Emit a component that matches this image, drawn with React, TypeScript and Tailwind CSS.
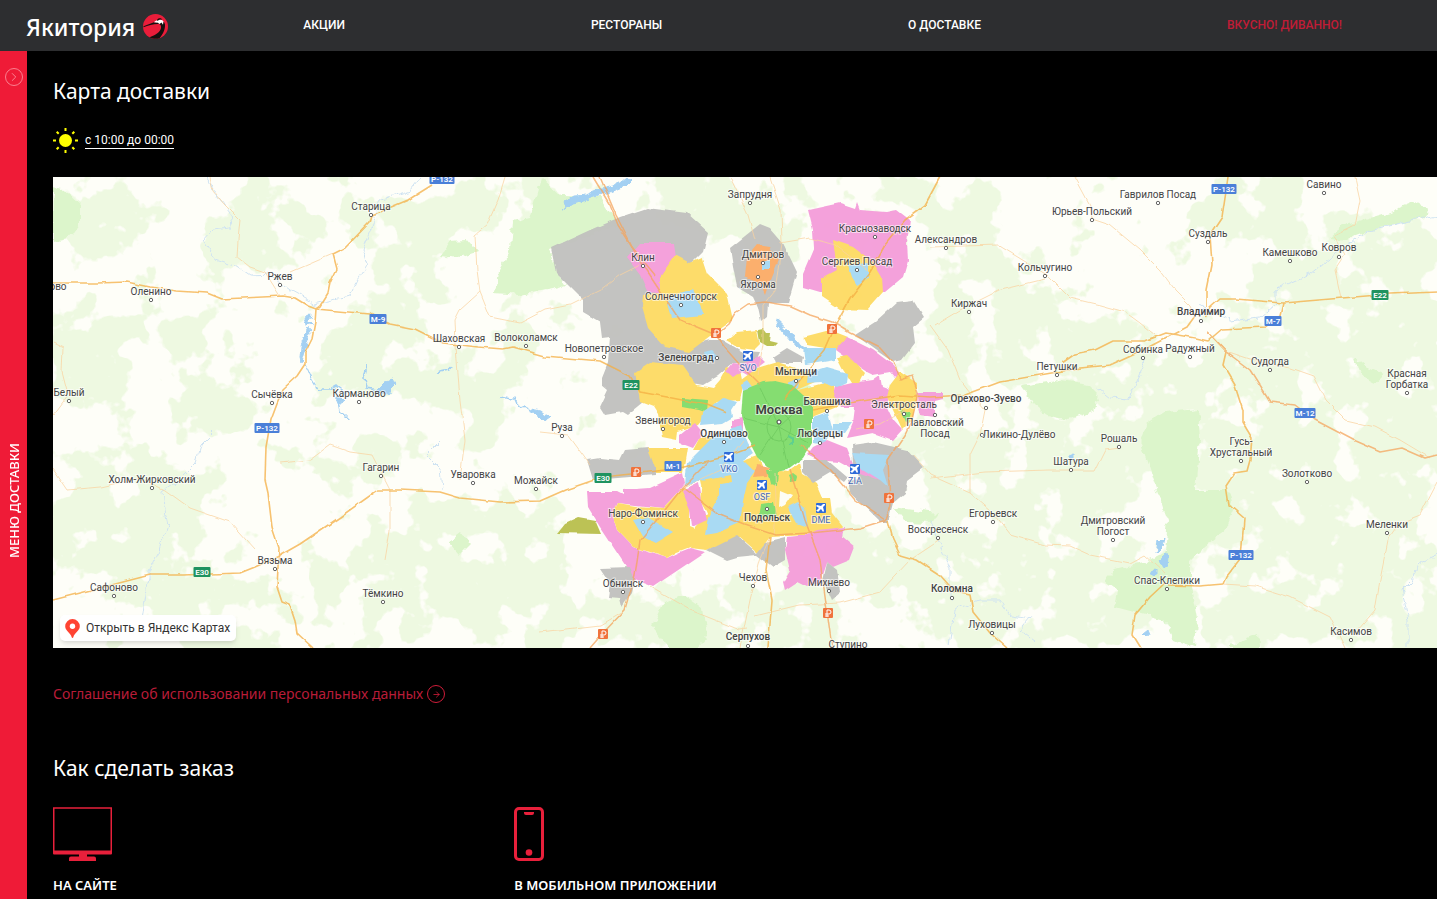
import { ArrowRight, ChevronRight } from "lucide-react";

type Point = [number, number];

const NAV = [
  { label: "АКЦИИ", href: "#promo" },
  { label: "РЕСТОРАНЫ", href: "#restaurants" },
  { label: "О ДОСТАВКЕ", href: "#delivery" },
  { label: "ВКУСНО! ДИВАННО!", href: "#sofa", accent: true },
];

// Zone colours
const GRAY = "#c0c0be";
const PINK = "#f49cda";
const YELLOW = "#fddb63";
const BLUE = "#a5d8f3";
const GREEN = "#7fdc6a";
const ORANGE = "#fbab66";
const OLIVE = "#b9bf4c";

// Delivery zones, painted in order
const ZONES: [string, string][] = [
  [GRAY, "551,248 590,230 620,217 647,208 687,213 708,232 703,252 692,263 700,300 690,345 710,340 723,340 743,352 760,353 755,364 733,363 718,376 703,385 692,383 680,372 650,380 643,402 627,415 622,412 605,415 600,407 608,390 602,385 602,377 608,362 610,337 602,338 600,322 583,312 583,300 556,273"],
  [PINK, "640,243 673,243 675,258 660,277 660,292 648,293 640,275 627,258"],
  [YELLOW, "675,255 690,263 702,258 707,273 727,293 733,320 722,327 710,337 690,352 665,347 648,328 642,307 643,295 660,292 660,277"],
  [BLUE, "670,297 693,290 698,302 703,315 672,318 668,305"],
  [GRAY, "730,248 750,232 760,224 770,228 783,243 797,272 788,303 768,303 767,317 761,322 758,308 753,297 737,287 733,267"],
  [ORANGE, "757,245 770,247 778,260 770,280 765,295 760,284 745,277 747,257"],
  [BLUE, "762,262 770,260 770,269 762,269"],
  [PINK, "808,210 840,203 855,208 857,202 860,210 887,212 897,210 910,220 907,243 908,260 903,277 885,292 820,293 803,288 803,273 814,247 813,230"],
  [YELLOW, "833,240 853,247 873,262 882,277 883,292 867,310 840,309 822,297 822,278 837,270"],
  [BLUE, "848,265 868,263 868,278 857,285 852,277"],
  [GRAY, "855,335 875,322 897,302 913,300 924,318 913,327 915,343 902,360 893,362 880,353"],
  [OLIVE, "758,330 763,329 766,333 770,333 769,341 777,343 774,346 767,346 760,342"],
  [YELLOW, "727,340 737,332 757,330 760,345 755,350 740,348"],
  [YELLOW, "803,337 830,330 848,337 837,350 807,345"],
  [BLUE, "803,348 835,348 835,360 817,363 805,365"],
  [GRAY, "773,357 787,348 803,357 802,363 775,363"],
  [YELLOW, "635,372 650,362 683,365 697,385 713,388 720,380 727,367 740,370 743,385 740,400 717,402 698,425 678,432 677,440 662,437 658,415 653,407 640,402"],
  [BLUE, "704,352 712,350 718,356 714,362 706,360"],
  [PINK, "726,372 733,363 741,364 760,357 765,362 757,368 756,380 742,372 733,378"],
  [YELLOW, "757,368 777,362 790,366 808,372 815,382 792,392 770,386 745,390 741,380"],
  [BLUE, "741,384 747,380 753,388 745,395"],
  [BLUE, "788,383 800,378 798,388 790,391"],
  [YELLOW, "798,390 820,384 833,380 837,407 812,417 805,402"],
  [PINK, "835,350 847,337 873,350 893,365 902,378 900,384 890,372 873,375 867,372 853,363"],
  [PINK, "835,387 852,383 873,380 880,375 882,387 890,390 887,407 893,420 902,430 893,440 873,433 847,438 853,423 855,407 840,407 833,396"],
  [YELLOW, "837,357 847,355 865,373 860,383 852,383 842,367"],
  [BLUE, "808,373 827,367 848,373 847,383 837,388 820,382 807,383"],
  [YELLOW, "900,372 917,383 917,400 912,420 902,430 893,410 887,397 890,385"],
  [PINK, "918,392 943,392 943,398 935,400 935,417 920,415 917,405"],
  [GREEN, "900,410 910,412 908,420 905,422"],
  [GREEN, "682,398 708,400 707,413 698,410 682,407"],
  [BLUE, "710,408 723,398 737,402 732,410 733,417 723,423 700,425 702,413"],
  [PINK, "680,435 695,423 703,433 693,448 680,443"],
  [PINK, "732,420 742,418 742,432 732,428"],
  [YELLOW, "700,437 713,437 710,450 693,450"],
  [YELLOW, "648,448 687,448 683,473 655,473"],
  [GRAY, "587,460 600,458 620,460 625,450 648,448 655,467 655,475 593,480"],
  [YELLOW, "700,480 733,477 743,460 757,455 763,468 788,472 800,463 803,475 817,483 823,497 830,497 832,513 843,527 807,535 770,537 758,553 740,537 707,550 690,548 695,527 707,513"],
  [BLUE, "685,485 687,463 700,450 713,437 740,425 747,443 753,453 743,460 755,472 747,483 743,500 740,523 717,533 705,535 708,517 718,497 720,484 700,480"],
  [YELLOW, "702,481 731,475 732,482 720,484 720,495 707,512 700,500"],
  [GREEN, "743,390 763,382 775,381 792,385 803,395 812,402 812,443 803,458 787,470 775,472 767,467 757,457 747,437 741,417"],
  [BLUE, "813,417 828,412 833,430 823,445 813,443"],
  [BLUE, "833,423 852,423 845,433 833,432"],
  [ORANGE, "757,465 770,468 767,477 753,478"],
  [GREEN, "767,470 778,470 777,485 770,483"],
  [GREEN, "789,476 793,474 797,477 796,481 791,482"],
  [GREEN, "760,505 773,503 776,517 758,517"],
  ["#fdfdf5", "780,490 792,495 785,505 779,508"],
  [BLUE, "788,507 798,502 805,508 808,527 797,523"],
  [PINK, "587,492 617,492 623,495 623,490 650,488 683,473 685,483 677,493 663,508 617,503 612,513 617,530 633,547 667,558 680,552 690,548 705,552 653,587 635,580 600,527 588,507"],
  [YELLOW, "617,503 637,506 663,508 683,487 690,497 690,527 697,530 703,542 677,552 667,558 650,552 633,547 617,530 612,513"],
  [PINK, "682,490 698,482 701,500 707,520 692,527 690,510"],
  [BLUE, "633,520 647,517 673,532 655,543 643,537"],
  [OLIVE, "557,533 565,523 578,517 595,520 601,534"],
  [GRAY, "707,550 737,535 757,553 765,543 785,538 785,560 773,567 757,555 737,557 727,560"],
  [GRAY, "600,568 630,567 635,580 632,593 622,607 620,598 608,597 610,583"],
  [PINK, "787,537 807,535 817,530 845,527 843,537 855,547 850,560 833,567 827,562 820,583 807,587 797,582 785,590 783,582 790,570 785,550"],
  [GRAY, "827,562 837,570 840,593 832,600 823,580"],
  [GRAY, "852,445 873,442 907,450 923,468 907,480 905,493 893,503 888,522 880,522 850,493 848,480 860,478 853,463"],
  [BLUE, "852,453 890,455 883,470 888,487 880,480 860,470"],
  [PINK, "813,447 827,440 847,448 853,463 880,480 860,473 840,462 817,460 807,455"],
  [GRAY, "803,460 827,460 847,477 843,482 830,473 813,483 803,473"],
];

const PARKS = [
  "53,187 65,190 80,204 80,225 72,236 53,240",
  "541,178 560,196 600,197 618,225 551,248 557,270 566,285 552,289 520,295 495,293 498,272 510,250 512,222 530,218",
  "1330,238 1345,225 1390,212 1420,200 1427,210 1425,219 1380,227 1345,240",
  "1020,385 1055,380 1090,385 1100,395 1095,410 1070,420 1048,416 1035,405",
  "1145,425 1165,412 1198,409 1200,440 1195,490 1228,490 1233,510 1225,530 1205,545 1190,560 1190,580 1197,620 1195,648 1175,640 1165,620 1115,607 1118,590 1105,580 1115,570 1145,562 1165,552 1168,520 1160,500 1150,470 1140,440",
  "653,627 663,603 683,594 702,608 707,635 697,648 670,648",
  "440,256 450,241 467,240 477,252 460,258",
  "893,507 937,513 930,523 905,522",
  "1355,358 1367,368 1385,375 1375,383 1360,375",
  "1230,645 1257,634 1258,648 1230,648",
  "448,542 460,533 470,545 460,555",
  "788,398 802,385 816,388 826,394 815,400",
];

// Rough density of woodland, turned into ragged patches by the filter
const WOODS: [number, number, number, number][] = [
  [95, 215, 60, 45], [260, 235, 60, 45], [400, 225, 60, 40], [500, 195, 60, 30],
  [85, 360, 50, 60], [160, 330, 80, 25], [220, 400, 50, 40], [130, 520, 90, 80],
  [370, 350, 60, 50], [420, 290, 40, 30], [470, 400, 60, 40], [350, 460, 60, 30],
  [380, 590, 80, 50], [200, 610, 90, 45], [480, 560, 90, 70], [540, 610, 70, 45],
  [530, 330, 40, 30], [700, 200, 60, 30], [690, 620, 80, 45], [800, 620, 60, 35],
  [940, 210, 80, 35], [1000, 300, 70, 55], [1060, 350, 100, 45], [950, 360, 60, 40],
  [1050, 470, 110, 60], [1000, 590, 100, 70], [1170, 440, 90, 70], [1330, 340, 130, 70],
  [1300, 500, 130, 90], [1350, 260, 100, 40], [1255, 210, 60, 45], [1400, 600, 60, 60],
  [1270, 610, 80, 50], [850, 560, 70, 40], [1410, 410, 70, 70], [1080, 590, 90, 60],
  [1130, 380, 80, 40], [760, 220, 60, 40], [940, 470, 50, 60],
];

const RIVERS = [
  "205,177 213,190 230,212 232,228 212,230 203,240 215,258 235,265 250,275 270,274 290,290 315,304 330,300 350,296 357,280 367,265 362,250 372,225 380,200 410,190 420,177",
  "213,432 200,445 196,462 180,478 163,490 165,510 168,525 160,550 150,570 145,600 142,620",
  "440,440 425,455 440,470 442,490",
  "1437,555 1418,563 1412,580 1402,590 1408,620 1408,648",
  "950,648 955,610 980,600 1000,600 1010,615 1030,618 1020,630 1035,642",
  "1200,305 1230,322 1260,318 1275,305 1275,290 1310,275 1335,255 1370,230 1437,215",
  "1095,386 1110,398 1128,400 1145,360",
  "930,520 940,545 950,570 950,600",
];

const LAKES = [
  "561,210 568,206 565,201 573,196 585,195 600,189 614,186 625,177 631,178 622,187 605,194 592,198 578,203 570,205",
  "378,390 385,383 393,381 397,386 391,392 384,393",
  "305,318 311,315 309,321 312,324 307,325",
  "301,345 309,328 310,334 304,352 301,362 300,358",
  "1160,560 1165,553 1170,556 1169,567 1163,568",
  "1150,572 1154,570 1154,576 1150,576",
  "1156,553 1158,542 1164,536 1162,547",
  "1143,634 1148,630 1150,635 1146,637",
  "1068,457 1073,455 1073,461 1068,461",
  "336,400 341,397 344,400 338,405",
  "775,318 790,332 800,345 808,352 797,348 786,335",
  "530,409 540,411 549,418 546,420 535,415",
];

const STREAMS = [
  "305,364 312,380 318,390 330,390 337,386 345,392 337,398 340,412 350,422",
  "367,365 364,378 366,388 378,390",
  "500,398 510,400 516,396 520,405 533,412",
  "437,373 450,370 452,366",
];

const HIGHWAYS = [
  "53,283 97,283 127,282 150,287 177,291 207,293 222,299 283,296 295,298 308,306 316,309 370,314 390,324 415,329 443,343 478,347 503,349 513,347 545,356 600,361 630,376 640,392 667,397 707,405 727,413",
  "432,185 408,200 372,215 370,222 345,248 333,254 337,269 330,283 328,293 320,306 316,309 315,323 312,339 305,353 305,364 297,376 283,389 277,403 271,419 266,447 265,480 268,493 272,527 279,548 277,587 282,602 290,605 295,620 297,633 313,648",
  "53,600 92,590 150,575 182,575 240,573 255,567 279,556 300,544 340,517 378,490 400,490 440,492 460,498 500,502 540,501 565,490 603,477 640,473 680,468 720,458 755,445",
  "1437,292 1390,294 1283,303 1237,299 1220,299 1210,308 1205,318",
  "1283,303 1280,316 1265,327 1222,329 1208,341 1195,338 1166,333 1145,341 1113,341 1095,350 1075,354 1062,363",
  "1195,316 1187,327 1145,349 1110,365 1080,368 1040,375 1000,382 965,395 930,397 900,395 850,403 812,410",
  "1228,177 1222,217 1210,235 1212,265 1207,290 1207,308",
  "1208,333 1226,352 1223,365 1235,385 1243,410 1243,423 1252,438 1250,460 1247,471 1234,473 1226,485 1229,505 1244,518 1241,558 1226,577 1223,584",
  "1165,583 1150,597 1135,615 1132,635 1140,648",
  "1168,585 1200,586 1223,584",
  "888,520 893,540 900,555 917,560 940,575 955,592 970,595 973,612 990,633 1007,648",
  "770,537 766,570 772,600 768,648",
  "940,177 925,205 905,220 885,245 870,272 850,298 838,320 825,350 800,380 785,400",
];

const TOLL_ROADS = [
  "593,177 610,205 618,225 640,260 660,290 680,320 716,335 725,348 740,365 760,385",
  "600,177 616,215 632,247 655,275",
  "716,335 728,325 735,313 748,304 765,302 790,306 810,315 832,322 850,333 880,348 895,365 900,380 912,376 918,392 912,420 905,435 888,460 890,505 886,520 860,528 810,533 775,535 745,525 720,515 700,500 683,487",
  "590,648 603,633 625,610 635,575 640,540 665,510 683,487 710,460",
  "790,470 805,520 820,560 827,610 832,648",
  "1208,333 1226,352 1250,370 1270,402 1295,405 1315,420 1355,441 1380,452 1402,448 1425,458 1437,455",
  "800,445 830,470 855,500 885,520",
];

const LOCAL_ROADS = [
  "210,177 213,190 225,205 240,220 238,240 237,257 250,267 265,272 280,296",
  "505,177 498,200 487,225 475,235 477,270 480,292 460,310 455,320 456,345 458,375 460,400 465,440 460,480",
  "480,292 490,317 520,323 545,310 570,305 600,290 620,275 640,265",
  "291,272 333,254",
  "53,343 63,348 62,372 68,395 53,415",
  "770,177 781,210 782,243 775,290 763,305 763,345 758,375",
  "730,177 748,215 755,240",
  "780,243 810,238 835,245 870,272",
  "930,247 998,245 1047,275 1070,298 1100,305 1125,312 1140,323 1155,335",
  "1075,177 1090,205 1092,219 1110,225 1140,250 1160,270 1175,290 1190,305 1195,316",
  "930,325 948,350 960,380 970,393 985,410 980,435 970,455 970,493",
  "912,455 930,475 970,493 990,510 1010,535 1045,545 1070,546 1090,555 1130,563 1145,555 1165,573",
  "1355,177 1360,200 1355,225 1335,235 1345,255 1335,270 1341,298",
  "1223,584 1255,586 1290,597 1330,617 1345,648",
  "1226,352 1250,360 1290,368 1313,376 1325,400 1345,420 1375,427 1400,440 1430,458",
  "1437,482 1420,515 1400,523 1388,540 1380,580 1375,610 1358,630",
  "650,587 690,610 740,630 747,629",
  "755,616 800,605 840,603 880,592 910,560 940,540",
  "53,468 68,490 100,487 140,478 165,490 190,508 230,522 255,550",
  "540,432 568,435 590,465",
  "740,648 750,600 760,560 770,537",
  "540,632 600,625 625,610",
  "1045,279 1000,290 960,310 935,325",
  "930,478 985,472 1050,470 1095,470 1105,450 1120,448",
  "280,463 310,460 330,445 350,452 372,455 390,490 390,530 385,560",
  "855,430 880,425 905,410",
  "775,472 776,500 773,537",
  "743,440 720,470 683,487",
];

// label, centre x, baseline y, dot, weight
const TOWNS: [string, number, number, Point | null, number?][] = [
  ["Старица", 371, 210, [371, 215]],
  ["Ржев", 280, 280, [280, 285]],
  ["Оленино", 151, 295, [151, 300]],
  ["ово", 58, 290, null],
  ["Белый", 69, 396, [69, 401]],
  ["Сычёвка", 272, 398, [272, 403]],
  ["Карманово", 359, 397, [359, 402]],
  ["Шаховская", 459, 342, [459, 347]],
  ["Волоколамск", 526, 341, [526, 346]],
  ["Новопетровское", 604, 352, [604, 357]],
  ["Руза", 562, 431, [562, 436]],
  ["Гагарин", 381, 471, [381, 476]],
  ["Уваровка", 473, 478, [473, 483]],
  ["Можайск", 536, 484, [536, 489]],
  ["Холм-Жирковский", 152, 483, [152, 488]],
  ["Вязьма", 275, 564, [275, 569]],
  ["Сафоново", 114, 591, [114, 596]],
  ["Тёмкино", 383, 597, [383, 602]],
  ["Запрудня", 750, 198, [750, 203]],
  ["Клин", 643, 261, [643, 266]],
  ["Солнечногорск", 681, 300, [681, 305]],
  ["Дмитров", 763, 258, [763, 263]],
  ["Яхрома", 758, 288, [758, 277]],
  ["Краснозаводск", 875, 232, [875, 237]],
  ["Сергиев Посад", 857, 265, [857, 270]],
  ["Александров", 946, 243, [946, 248]],
  ["Зеленоград", 686, 361, [717, 358], 500],
  ["Мытищи", 796, 375, [796, 381], 500],
  ["Балашиха", 827, 405, [827, 411], 500],
  ["Электросталь", 904, 408, [904, 414]],
  ["Павловский", 935, 426, [935, 415]],
  ["Посад", 935, 437, null],
  ["Звенигород", 663, 424, [663, 429]],
  ["Одинцово", 724, 437, [724, 442], 500],
  ["Люберцы", 820, 437, [820, 443], 500],
  ["Наро-Фоминск", 643, 517, [643, 522]],
  ["Подольск", 767, 521, [767, 509], 500],
  ["Обнинск", 623, 587, [623, 592]],
  ["Чехов", 753, 581, [753, 586]],
  ["Михнево", 829, 586, [829, 591]],
  ["Серпухов", 748, 640, [748, 646], 500],
  ["Ступино", 848, 648, null],
  ["Воскресенск", 938, 533, [938, 538]],
  ["Коломна", 952, 592, [952, 598], 500],
  ["Луховицы", 992, 628, [992, 633]],
  ["Егорьевск", 993, 517, [993, 522]],
  ["Шатура", 1071, 465, [1071, 470]],
  ["Рошаль", 1119, 442, [1119, 447]],
  ["Ликино-Дулёво", 1019, 438, [982, 435]],
  ["Дмитровский", 1113, 524, null],
  ["Погост", 1113, 535, [1113, 540]],
  ["Спас-Клепики", 1167, 584, [1167, 589]],
  ["Орехово-Зуево", 986, 402, [986, 408], 500],
  ["Петушки", 1057, 370, [1057, 375]],
  ["Киржач", 969, 307, [969, 312]],
  ["Кольчугино", 1045, 271, [1045, 276]],
  ["Юрьев-Польский", 1092, 215, [1092, 220]],
  ["Гаврилов Посад", 1158, 198, [1158, 203]],
  ["Суздаль", 1208, 237, [1208, 242]],
  ["Владимир", 1201, 315, [1201, 321], 500],
  ["Собинка", 1143, 353, [1143, 358]],
  ["Радужный", 1190, 352, [1190, 357]],
  ["Судогда", 1270, 365, [1270, 370]],
  ["Камешково", 1290, 256, [1290, 261]],
  ["Ковров", 1339, 251, [1339, 257]],
  ["Савино", 1324, 188, [1324, 193]],
  ["Красная", 1407, 377, null],
  ["Горбатка", 1407, 388, [1407, 393]],
  ["Гусь-", 1241, 445, null],
  ["Хрустальный", 1241, 456, [1241, 461]],
  ["Золотково", 1307, 477, [1307, 482]],
  ["Меленки", 1387, 528, [1387, 533]],
  ["Касимов", 1351, 635, [1351, 640]],
];

const SHIELDS: [string, number, number, string][] = [
  ["Р-132", 442, 179, "#4a7fd8"],
  ["М-9", 378, 319, "#4a7fd8"],
  ["Р-132", 267, 428, "#4a7fd8"],
  ["E30", 202, 572, "#1f9360"],
  ["E22", 631, 385, "#1f9360"],
  ["E30", 603, 478, "#1f9360"],
  ["М-1", 673, 466, "#4a7fd8"],
  ["Р-132", 1224, 189, "#4a7fd8"],
  ["E22", 1380, 295, "#1f9360"],
  ["М-7", 1273, 321, "#4a7fd8"],
  ["М-12", 1305, 413, "#4a7fd8"],
  ["Р-132", 1241, 555, "#4a7fd8"],
];

const TOLLS: Point[] = [
  [716, 333], [832, 329], [869, 424], [636, 472], [889, 498], [603, 634], [828, 613],
];

const AIRPORTS: [string, number, number][] = [
  ["SVO", 748, 356],
  ["VKO", 729, 457],
  ["OSF", 762, 485],
  ["ZIA", 855, 469],
  ["DME", 821, 508],
];

function Lines({ list, color, width }: { list: string[]; color: string; width: number }) {
  return (
    <g fill="none" stroke={color} strokeWidth={width} strokeLinejoin="round">
      {list.map((points) => (
        <polyline key={points} points={points} />
      ))}
    </g>
  );
}

function DeliveryMap() {
  return (
    <svg
      viewBox="53 177 1384 471"
      preserveAspectRatio="xMidYMid slice"
      className="block h-[471px] w-full bg-[#fefef8] font-['Roboto',sans-serif]"
      role="img"
      aria-label="Карта зон доставки"
    >
      <defs>
        {/* blurred density + noise, cut at a threshold */}
        <filter id="woods" filterUnits="userSpaceOnUse" x="53" y="177" width="1384" height="471" colorInterpolationFilters="sRGB">
          <feGaussianBlur in="SourceAlpha" stdDeviation="12" result="density" />
          <feTurbulence type="fractalNoise" baseFrequency="0.03" numOctaves="4" seed="11" result="noise" />
          <feComposite in="density" in2="noise" operator="arithmetic" k2="0.35" k3="1" k4="-0.2" result="mix" />
          <feComponentTransfer in="mix" result="cut">
            <feFuncA type="linear" slope="18" intercept="-9" />
          </feComponentTransfer>
          <feFlood floodColor="#eef9e1" />
          <feComposite in2="cut" operator="in" />
        </filter>
        <filter id="ragged" filterUnits="userSpaceOnUse" x="53" y="177" width="1384" height="471" colorInterpolationFilters="sRGB">
          <feTurbulence type="fractalNoise" baseFrequency="0.09" numOctaves="3" seed="4" />
          <feDisplacementMap in="SourceGraphic" scale="9" xChannelSelector="R" yChannelSelector="G" />
        </filter>
        <filter id="wavy" filterUnits="userSpaceOnUse" x="53" y="177" width="1384" height="471" colorInterpolationFilters="sRGB">
          <feTurbulence type="fractalNoise" baseFrequency="0.06" numOctaves="2" seed="7" />
          <feDisplacementMap in="SourceGraphic" scale="4" xChannelSelector="R" yChannelSelector="G" />
        </filter>
      </defs>

      <g filter="url(#woods)">
        {WOODS.map(([cx, cy, rx, ry]) => (
          <ellipse key={`${cx}-${cy}`} cx={cx} cy={cy} rx={rx} ry={ry} />
        ))}
      </g>

      <g filter="url(#ragged)">
        <g fill="#dcf5cb">
          {PARKS.map((points) => (
            <polygon key={points} points={points} />
          ))}
        </g>
        <Lines list={RIVERS} color="#cfe3f2" width={1} />
        <Lines list={STREAMS} color="#a3d0f2" width={1.5} />
        <g fill="#a3d0f2" stroke="#a3d0f2">
          {LAKES.map((points) => (
            <polygon key={points} points={points} />
          ))}
        </g>
      </g>

      <g filter="url(#wavy)">
        <g opacity="0.95">
          {ZONES.map(([fill, points]) => (
            <polygon key={points} points={points} fill={fill} />
          ))}
        </g>
        <g opacity="0.75">
          <Lines list={LOCAL_ROADS} color="#fad3a0" width={1} />
          <Lines list={HIGHWAYS} color="#f4ae43" width={1.6} />
          <Lines list={TOLL_ROADS} color="#f5a45c" width={1.5} />
        </g>
        {/* Moscow ring and streets */}
        <g fill="none" stroke="#62bd55" strokeWidth="1" opacity="0.5">
          <ellipse cx="779" cy="427" rx="12" ry="14" />
          <path d="M779 427 760 388M779 427 806 402M779 427 808 443M779 427 788 468M779 427 760 455M779 427 743 418" />
        </g>
        <path d="M788 436l4 2 0 5-3 1" fill="none" stroke="#5fd08f" strokeWidth="2" />
      </g>

      {SHIELDS.map(([name, x, y, fill]) => {
        const width = name.length > 3 ? (name.length > 4 ? 25 : 21) : 17;
        return (
          <g key={`${name}-${x}`}>
            <rect x={x - width / 2} y={y - 5} width={width} height={10} rx="1" fill={fill} />
            <text x={x} y={y + 3} textAnchor="middle" fontSize="8" fontWeight="600" fill="#fff">
              {name}
            </text>
          </g>
        );
      })}

      {TOLLS.map(([x, y]) => (
        <g key={`${x}-${y}`}>
          <rect x={x - 5} y={y - 5} width="10" height="10" rx="1" fill="#f0733c" />
          <path
            d={`M${x - 1} ${y + 4}v-7h2a2 2 0 0 1 0 4h-4m0 2h4`}
            fill="none"
            stroke="#fff"
            strokeWidth="1"
          />
        </g>
      ))}

      {AIRPORTS.map(([code, x, y]) => (
        <g key={code}>
          <rect x={x - 5} y={y - 5} width="10" height="10" rx="1" fill="#2f6bd8" />
          <path
            d={`M${x + 4} ${y - 4}l-2 0-2 2-4-1-1 1 3 2-2 2-1 0 2 2 0 0 1-1 2-2 2 3 1-1-1-4 2-2z`}
            fill="#fff"
          />
          <text x={x} y={y + 15} textAnchor="middle" fontSize="9" fill="#4468b5" stroke="#fff" strokeWidth="2" strokeOpacity="0.6" paintOrder="stroke">
            {code}
          </text>
        </g>
      ))}

      {TOWNS.map(([name, x, y, dot, weight]) => (
        <g key={`${name}-${x}-${y}`}>
          {dot && <circle cx={dot[0]} cy={dot[1]} r="1.7" fill="#fff" stroke="#555" strokeWidth="0.9" />}
          <text
            x={x}
            y={y}
            textAnchor="middle"
            fontSize="10"
            fontWeight={weight ?? 400}
            fill="#444"
            stroke="#fff"
            strokeWidth="2"
            strokeOpacity="0.6"
            paintOrder="stroke"
          >
            {name}
          </text>
        </g>
      ))}

      <circle cx="779" cy="422" r="2" fill="#fff" stroke="#444" />
      <text x="779" y="414" textAnchor="middle" fontSize="13" fontWeight="600" fill="#3f3f3f" stroke="#fff" strokeWidth="2" strokeOpacity="0.6" paintOrder="stroke">
        Москва
      </text>
    </svg>
  );
}

function Logo() {
  return (
    <a href="#home" className="flex items-center gap-2 pt-[2px] text-white">
      <span className="font-['Noto_Sans',sans-serif] text-[23px] leading-8 font-medium">Якитория</span>
      <svg width="25" height="25" viewBox="0 0 25 25" aria-hidden="true">
        <circle cx="12.5" cy="12.5" r="12.5" fill="#ea1d3a" />
        {/* neck, beak, white cap */}
        <path d="M14 9.500C17.500 9.500 19 12 17.500 15.500C16 19 11.500 21.500 6.500 23.300C9.500 25 13.500 25.300 16.500 24.300C19.500 21 22.300 16 22 10.500C21.500 7 18 5.500 14 7z" fill="#15100f" />
        <path d="M.500 12.200L11 8.200L15 8.500L15 10C10 10.200 5 11.500 .500 13.200z" fill="#15100f" />
        <path d="M11 8.300C13 5.500 18 4.800 20.500 7.200L20 10.800L18.500 8.600L16.500 10L15 8.700z" fill="#fff" />
        <path d="M14 6.300C15 3.800 18 3.800 19.300 5.700C17.500 5.200 16 5.500 14.800 7z" fill="#15100f" />
      </svg>
    </a>
  );
}

function SunIcon() {
  return (
    <svg width="25" height="25" viewBox="0 0 25 25" stroke="#ffff00" strokeWidth="2" aria-hidden="true">
      <circle cx="12.500" cy="12.500" r="6.500" fill="#ffff00" stroke="none" />
      <path d="M12.500 0v3M12.500 22v3M0 12.500h3M22 12.500h3M3.700 3.700l2 2M19.300 19.300l2 2M3.700 21.300l2-2M19.300 5.700l2-2" />
    </svg>
  );
}

export default function App() {
  return (
    <div className="flex min-h-screen flex-col bg-black font-['Noto_Sans',sans-serif] text-white">
      <header className="flex h-[51px] items-center bg-[#2d2e30] pl-[26px]">
        <Logo />
        <nav className="flex flex-1 justify-between pr-[95px] pb-px pl-[135px] font-['Roboto',sans-serif] text-[12px] leading-4 font-medium">
          {NAV.map((item) => (
            <a key={item.label} href={item.href} className={item.accent ? "text-[#c01c36]" : "text-white"}>
              {item.label}
            </a>
          ))}
        </nav>
      </header>

      <div className="flex flex-1">
        <aside className="w-[27px] shrink-0 bg-[#ef1b37]">
          <button type="button" className="flex h-full w-full flex-col items-center pt-[17px]">
            <span className="flex size-[18px] shrink-0 items-center justify-center rounded-full border border-[#fb7f8f] text-[#fb8f9d]">
              <ChevronRight size={14} strokeWidth={1.5} />
            </span>
            <span className="flex flex-1 rotate-180 items-center justify-center pb-4 text-[13px] leading-4 font-medium [writing-mode:vertical-rl]">
              МЕНЮ ДОСТАВКИ
            </span>
          </button>
        </aside>

        <main className="min-w-0 flex-1 overflow-hidden pl-[26px]">
          <h1 className="pt-[26px] text-[21px] leading-7">Карта доставки</h1>

          <div className="mt-[23px] flex items-center gap-[7px]">
            <SunIcon />
            <a href="#hours" className="border-b border-white pt-px font-['Roboto',sans-serif] text-[12px] leading-[15px]">
              с 10:00 до 00:00
            </a>
          </div>

          <section className="relative mt-6">
            <DeliveryMap />
            <a
              href="#yandex-maps"
              className="absolute bottom-[7px] left-[7px] flex h-[26px] items-center gap-[6px] rounded-[5px] bg-white pr-[6px] pl-[5px] font-['Roboto',sans-serif] text-[12px] text-[#333] shadow-md"
            >
              <svg width="15" height="19" viewBox="0 0 15 19" aria-hidden="true">
                <path d="M7.500 0A7.300 7.300 0 0 0 .200 7.300C.200 12 5.500 13.500 6.700 18.300C6.900 19.200 8.100 19.200 8.300 18.300C9.500 13.500 14.800 12 14.800 7.300A7.300 7.300 0 0 0 7.500 0z" fill="#f43" />
                <circle cx="7.500" cy="7.300" r="2.700" fill="#fff" />
              </svg>
              Открыть в Яндекс Картах
            </a>
          </section>

          <a href="#agreement" className="mt-9 flex items-center gap-1 text-[14px] leading-5 text-[#b81c38]">
            Соглашение об использовании персональных данных
            <span className="flex size-[18px] items-center justify-center rounded-full border border-[#d01d3a] text-[#e01d3c]">
              <ArrowRight size={9} />
            </span>
          </a>

          <h2 className="mt-[50px] text-[21px] leading-7">Как сделать заказ</h2>

          <div className="mt-[25px] grid grid-cols-3 text-[13px] leading-4 font-semibold">
            <div>
              <svg width="59" height="54" viewBox="0 0 59 54" aria-hidden="true">
                <path d="M.750 44V1h57.500v43" fill="none" stroke="#e8203b" strokeWidth="1.500" />
                <path d="M0 43.500h59v3a1 1 0 0 1-1 1H34v2h7a2 2 0 0 1 2 2V54H16v-2.500a2 2 0 0 1 2-2h8v-2H1a1 1 0 0 1-1-1z" fill="#e8203b" />
              </svg>
              <h3 className="mt-4">НА САЙТЕ</h3>
            </div>
            <div>
              <svg width="30" height="54" viewBox="0 0 30 54" aria-hidden="true">
                <rect x="1.500" y="1.500" width="27" height="51" rx="3.500" fill="none" stroke="#e8203b" strokeWidth="3" />
                <path d="M10 5h10v1a2 2 0 0 1-2 2h-6a2 2 0 0 1-2-2z" fill="#e8203b" />
                <circle cx="15" cy="45.500" r="3.300" fill="#e8203b" />
              </svg>
              <h3 className="mt-4">В МОБИЛЬНОМ ПРИЛОЖЕНИИ</h3>
            </div>
          </div>
        </main>
      </div>
    </div>
  );
}
